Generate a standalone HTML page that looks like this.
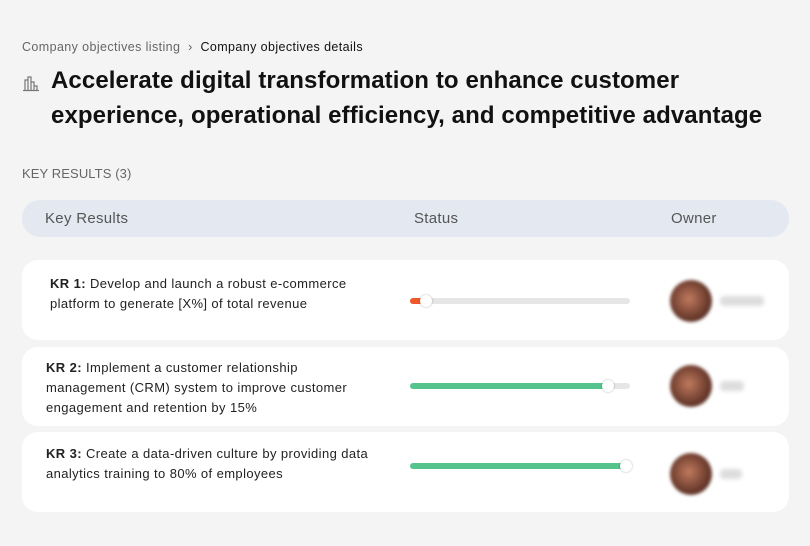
<!DOCTYPE html>
<html><head><style>
body{margin:0;width:810px;height:546px;background:#f4f4f5;font-family:"Liberation Sans",sans-serif;position:relative;overflow:hidden;color:#111}
.a{position:absolute}
.bc{left:22px;top:40px;font-size:12.5px;letter-spacing:0.4px;color:#666}
.bc b{font-weight:normal;color:#111}
h1{position:absolute;left:51px;top:63px;margin:0;font-size:24px;line-height:35px;font-weight:bold;color:#111;letter-spacing:0.1px}
.kr{left:22px;top:166px;font-size:13px;letter-spacing:0.1px;color:#666}
.hdr{left:22px;top:200px;width:767px;height:37px;background:#e4e9f1;border-radius:18px;font-size:15px;color:#555;letter-spacing:0.3px}
.hdr span{position:absolute;top:10px}
.card{left:22px;width:767px;background:#fff;border-radius:16px}
.t{position:absolute;font-size:13px;letter-spacing:0.4px;line-height:20px;color:#222}
.bar{position:absolute;left:388px;width:220px;height:6px;border-radius:3px;background:#e6e6e6}
.fill{position:absolute;left:0;top:0;height:6px;border-radius:3px}
.knob{position:absolute;top:-3px;width:12px;height:12px;border-radius:50%;background:#fff;box-shadow:0 0 2px rgba(0,0,0,.3)}
.av{position:absolute;left:648px;width:42px;height:42px;border-radius:50%;background:radial-gradient(circle at 45% 45%,#c07a5e,#6a3a2c 60%,#3a2420);filter:blur(1.5px)}
.nm{position:absolute;left:698px;width:44px;height:10px;background:#ddd;filter:blur(2px);border-radius:4px}
</style></head><body>
<div class="a bc">Company objectives listing &nbsp;›&nbsp; <b>Company objectives details</b></div>
<svg class="a" style="left:22px;top:74px" width="18" height="18" viewBox="0 0 18 18" fill="none" stroke="#777" stroke-width="1.2"><path d="M3 16V6h3v10M6 16V3h3v13M9 16V8h3v8M12 16v-4h3v4M1 16.5h16"/></svg>
<h1>Accelerate digital transformation to enhance customer<br>experience, operational efficiency, and competitive advantage</h1>
<div class="a kr">KEY RESULTS (3)</div>
<div class="a hdr"><span style="left:23px">Key Results</span><span style="left:392px">Status</span><span style="left:649px">Owner</span></div>

<div class="a card" style="top:260px;height:80px">
<div class="t" style="left:28px;top:14px"><b>KR 1:</b> Develop and launch a robust e-commerce<br>platform to generate [X%] of total revenue</div>
<div class="bar" style="top:38px"><div class="fill" style="width:14px;background:#f0582a"></div><div class="knob" style="left:10px"></div></div>
<div class="av" style="top:20px"></div><div class="nm" style="top:36px"></div>
</div>
<div class="a card" style="top:347px;height:79px">
<div class="t" style="left:24px;top:11px"><b>KR 2:</b> Implement a customer relationship<br>management (CRM) system to improve customer<br>engagement and retention by 15%</div>
<div class="bar" style="top:36px"><div class="fill" style="width:198px;background:#55c48c"></div><div class="knob" style="left:192px"></div></div>
<div class="av" style="top:18px"></div><div class="nm" style="top:34px;width:24px"></div>
</div>
<div class="a card" style="top:432px;height:80px">
<div class="t" style="left:24px;top:12px"><b>KR 3:</b> Create a data-driven culture by providing data<br>analytics training to 80% of employees</div>
<div class="bar" style="top:31px"><div class="fill" style="width:216px;background:#55c48c"></div><div class="knob" style="left:210px"></div></div>
<div class="av" style="top:21px"></div><div class="nm" style="top:37px;width:22px"></div>
</div>
</body></html>
